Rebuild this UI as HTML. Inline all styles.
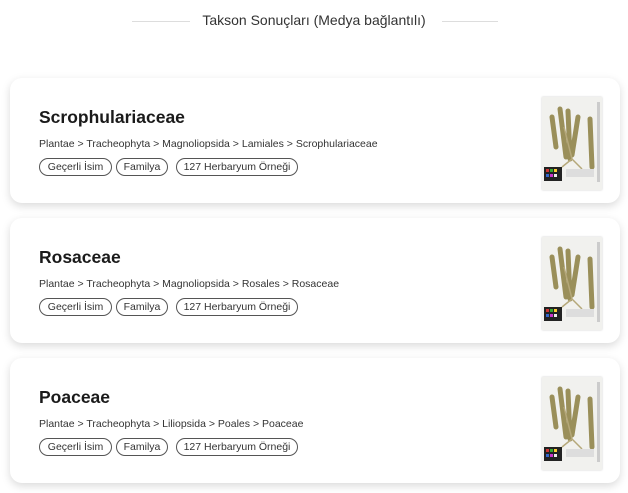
<!DOCTYPE html>
<html><head><meta charset="utf-8"><style>
body{margin:0;width:628px;height:493px;background:#fff;font-family:"Liberation Sans",sans-serif;color:#222;overflow:hidden;position:relative}
.hd{position:absolute;top:12px;left:0;width:628px;text-align:center;font-size:14px;color:#333}
.ln{position:absolute;top:21px;height:1px;background:#ddd}
.card{position:absolute;left:10px;width:610px;height:125px;background:#fff;border-radius:12px;box-shadow:0 3px 9px rgba(0,0,0,.15)}
.t{position:absolute;left:29px;top:29px;font-size:17.5px;font-weight:bold;color:#1a1a1a}
.b{position:absolute;left:29px;top:60px;font-size:10.5px;color:#333}
.p{position:absolute;top:80px;height:16px;line-height:16px;border:1px solid #555;border-radius:9px;font-size:10.5px;color:#333;text-align:center;box-sizing:content-box}
.img{position:absolute;left:532px;top:19px;width:60px;height:93px;background:#f1f1ee;box-shadow:0 0 2px rgba(0,0,0,.2)}
</style></head><body>
<div class="ln" style="left:132px;width:58px"></div>
<div class="ln" style="left:442px;width:56px"></div>
<div class="hd">Takson Sonuçları (Medya bağlantılı)</div>

<div class="card" style="top:78px">
<div class="t">Scrophulariaceae</div>
<div class="b">Plantae &gt; Tracheophyta &gt; Magnoliopsida &gt; Lamiales &gt; Scrophulariaceae</div>
<div class="p" style="left:29px;width:71px">Geçerli İsim</div><div class="p" style="left:106px;width:50px">Familya</div><div class="p" style="left:166px;width:120px">127 Herbaryum Örneği</div>
<div class="img"><svg width="60" height="93"><path d="M18 12 L24 60 M26 14 L28 62 M36 20 L30 58 M10 20 L14 50 M48 22 L50 70" stroke="#9a8f5a" stroke-width="5" fill="none" stroke-linecap="round"/><path d="M22 30 L30 62 L20 70 M30 62 L40 72" stroke="#b5a87a" stroke-width="1.5" fill="none"/><rect x="2" y="70" width="18" height="14" fill="#222"/><rect x="4" y="72" width="3" height="3" fill="#c33"/><rect x="8" y="72" width="3" height="3" fill="#3a3"/><rect x="12" y="72" width="3" height="3" fill="#fc3"/><rect x="4" y="77" width="3" height="3" fill="#36c"/><rect x="8" y="77" width="3" height="3" fill="#c3c"/><rect x="12" y="77" width="3" height="3" fill="#eee"/><rect x="24" y="72" width="28" height="8" fill="#ddd"/><rect x="55" y="5" width="3" height="80" fill="#ccc"/></svg></div>
</div>

<div class="card" style="top:218px">
<div class="t">Rosaceae</div>
<div class="b">Plantae &gt; Tracheophyta &gt; Magnoliopsida &gt; Rosales &gt; Rosaceae</div>
<div class="p" style="left:29px;width:71px">Geçerli İsim</div><div class="p" style="left:106px;width:50px">Familya</div><div class="p" style="left:166px;width:120px">127 Herbaryum Örneği</div>
<div class="img"><svg width="60" height="93"><path d="M18 12 L24 60 M26 14 L28 62 M36 20 L30 58 M10 20 L14 50 M48 22 L50 70" stroke="#9a8f5a" stroke-width="5" fill="none" stroke-linecap="round"/><path d="M22 30 L30 62 L20 70 M30 62 L40 72" stroke="#b5a87a" stroke-width="1.5" fill="none"/><rect x="2" y="70" width="18" height="14" fill="#222"/><rect x="4" y="72" width="3" height="3" fill="#c33"/><rect x="8" y="72" width="3" height="3" fill="#3a3"/><rect x="12" y="72" width="3" height="3" fill="#fc3"/><rect x="4" y="77" width="3" height="3" fill="#36c"/><rect x="8" y="77" width="3" height="3" fill="#c3c"/><rect x="12" y="77" width="3" height="3" fill="#eee"/><rect x="24" y="72" width="28" height="8" fill="#ddd"/><rect x="55" y="5" width="3" height="80" fill="#ccc"/></svg></div>
</div>

<div class="card" style="top:358px">
<div class="t">Poaceae</div>
<div class="b">Plantae &gt; Tracheophyta &gt; Liliopsida &gt; Poales &gt; Poaceae</div>
<div class="p" style="left:29px;width:71px">Geçerli İsim</div><div class="p" style="left:106px;width:50px">Familya</div><div class="p" style="left:166px;width:120px">127 Herbaryum Örneği</div>
<div class="img"><svg width="60" height="93"><path d="M18 12 L24 60 M26 14 L28 62 M36 20 L30 58 M10 20 L14 50 M48 22 L50 70" stroke="#9a8f5a" stroke-width="5" fill="none" stroke-linecap="round"/><path d="M22 30 L30 62 L20 70 M30 62 L40 72" stroke="#b5a87a" stroke-width="1.5" fill="none"/><rect x="2" y="70" width="18" height="14" fill="#222"/><rect x="4" y="72" width="3" height="3" fill="#c33"/><rect x="8" y="72" width="3" height="3" fill="#3a3"/><rect x="12" y="72" width="3" height="3" fill="#fc3"/><rect x="4" y="77" width="3" height="3" fill="#36c"/><rect x="8" y="77" width="3" height="3" fill="#c3c"/><rect x="12" y="77" width="3" height="3" fill="#eee"/><rect x="24" y="72" width="28" height="8" fill="#ddd"/><rect x="55" y="5" width="3" height="80" fill="#ccc"/></svg></div>
</div>
</body></html>
